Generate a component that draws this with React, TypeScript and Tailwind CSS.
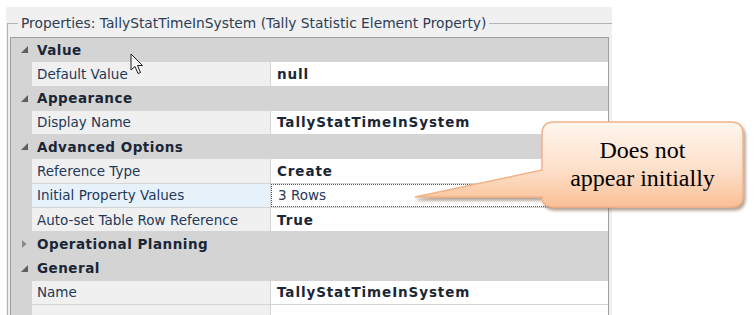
import React from 'react';

type Row =
  | { kind: 'cat'; label: string; open: boolean }
  | { kind: 'prop'; name: string; value: string; bold?: boolean; selected?: boolean };

const rows: Row[] = [
  { kind: 'cat', label: 'Value', open: true },
  { kind: 'prop', name: 'Default Value', value: 'null', bold: true },
  { kind: 'cat', label: 'Appearance', open: true },
  { kind: 'prop', name: 'Display Name', value: 'TallyStatTimeInSystem', bold: true },
  { kind: 'cat', label: 'Advanced Options', open: true },
  { kind: 'prop', name: 'Reference Type', value: 'Create', bold: true },
  { kind: 'prop', name: 'Initial Property Values', value: '3 Rows', selected: true },
  { kind: 'prop', name: 'Auto-set Table Row Reference', value: 'True', bold: true },
  { kind: 'cat', label: 'Operational Planning', open: false },
  { kind: 'cat', label: 'General', open: true },
  { kind: 'prop', name: 'Name', value: 'TallyStatTimeInSystem', bold: true },
  { kind: 'prop', name: '', value: '' },
];

const Expander = ({ open }: { open: boolean }) =>
  open ? (
    <svg width="9" height="9" viewBox="0 0 9 9" className="ml-[9px]">
      <path d="M8 1 L8 8 L1 8 Z" fill="#5f5f5f" />
    </svg>
  ) : (
    <svg width="8" height="10" viewBox="0 0 8 10" className="ml-[9px]">
      <path d="M2 1 L6.5 5 L2 9 Z" fill="#8a8a8a" />
    </svg>
  );

export default function App() {
  return (
    <div className="relative w-[754px] h-[315px] overflow-hidden bg-white pl-[6px] pt-[7px] font-['DejaVu_Sans',sans-serif] text-[13.5px]">
      <div className="w-[606px] h-[320px] bg-[#f0f0f0] pt-[1px] pl-[1px]">
        <fieldset className="mt-[7px] border-t border-l border-[#b4b4b4] h-[330px] pl-[2px] pr-[2px]">
          <legend className="ml-[8px] px-[3px] leading-[16px] text-[13.8px] text-[#2c3e55]">
            Properties: TallyStatTimeInSystem (Tally Statistic Element Property)
          </legend>
          <div className="mt-[6px] w-[599px] border border-b-0 border-[#a0a0a0] bg-[#d4d4d4] flex flex-col gap-px">
            {rows.map((r, i) =>
              r.kind === 'cat' ? (
                <div key={i} className="h-[23.3px] flex items-center">
                  <div className="w-[22px] flex items-center">
                    <Expander open={r.open} />
                  </div>
                  <span className="pl-[4px] font-bold tracking-[0.5px] text-[#1a2636]">{r.label}</span>
                </div>
              ) : (
                <div key={i} className="h-[23.3px] flex">
                  <div className="w-[21px] shrink-0" />
                  <div
                    className={`w-[238px] shrink-0 pl-[5px] flex items-center text-[#22395a] ${
                      r.selected ? 'bg-[#e6f1fa]' : 'bg-[#f0f0f0]'
                    }`}
                  >
                    {r.name}
                  </div>
                  <div
                    className={`ml-px flex-1 bg-white pl-[6px] flex items-center ${
                      r.selected ? 'border border-dotted border-[#555] pl-[5px] text-[#22395a]' : 'text-[#1a2636]'
                    } ${r.bold ? 'font-bold tracking-[0.9px]' : ''}`}
                  >
                    {r.value}
                  </div>
                </div>
              )
            )}
          </div>
        </fieldset>
      </div>

      {/* mouse cursor */}
      <svg className="absolute left-[130px] top-[53px]" width="14" height="22" viewBox="0 0 14 22">
        <path
          d="M1 1 L1 17 L5 13.5 L8 20.5 L10.5 19.5 L7.5 12.5 L12.5 12.5 Z"
          fill="#f4f4f4"
          stroke="#222"
          strokeWidth="1"
          strokeLinejoin="round"
        />
      </svg>

      {/* callout */}
      <svg className="absolute left-0 top-0 pointer-events-none" width="754" height="315" viewBox="0 0 754 315">
        <defs>
          <linearGradient id="calloutFill" x1="0" y1="0" x2="0" y2="1">
            <stop offset="0" stopColor="#fff6ee" />
            <stop offset="0.55" stopColor="#fde0ca" />
            <stop offset="1" stopColor="#fac096" />
          </linearGradient>
          <filter id="calloutShadow" x="-10%" y="-10%" width="130%" height="140%">
            <feDropShadow dx="2" dy="3" stdDeviation="1.6" floodColor="#7a5a40" floodOpacity="0.55" />
          </filter>
        </defs>
        <path
          d="M554 122 H731 Q743 122 743 134 V195 Q743 207 731 207 H554 Q542 207 542 197 L415 197 L542 170 V134 Q542 122 554 122 Z"
          fill="url(#calloutFill)"
          stroke="#f2b287"
          strokeWidth="1.5"
          filter="url(#calloutShadow)"
        />
      </svg>
      <div className="absolute left-[542px] top-[121px] w-[201px] h-[85px] flex items-center justify-center text-center font-['Liberation_Serif',serif] text-[24px] leading-[28px] text-black">
        Does not
        <br />
        appear initially
      </div>
    </div>
  );
}
